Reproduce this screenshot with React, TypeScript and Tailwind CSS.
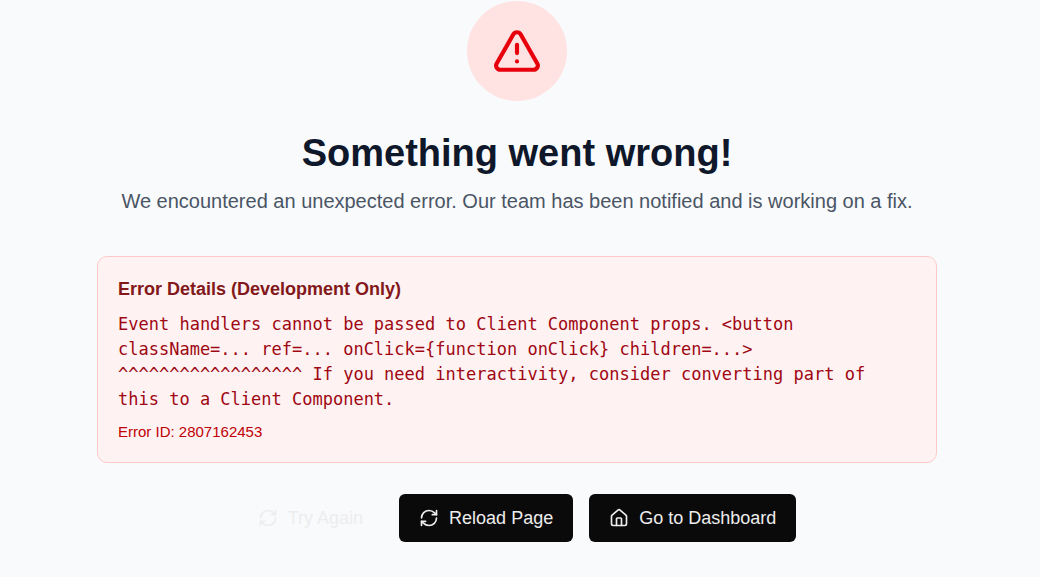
import { House, RefreshCw, TriangleAlert } from "lucide-react";

const buttonBase =
  "inline-flex h-12 items-center gap-2.5 rounded-md px-5 text-lg font-medium whitespace-nowrap";

export default function App() {
  return (
    <main className="flex min-h-screen flex-col items-center bg-[#f9fafc] pt-px pr-1.5 pb-8 font-['Liberation_Sans',Arial,sans-serif]">
      <div className="flex w-full max-w-[840px] flex-col items-center">
        <div className="flex size-[100px] items-center justify-center rounded-full bg-[#ffe2e2]">
          <TriangleAlert className="size-[50px] text-[#e7000b]" aria-hidden="true" />
        </div>
        <h1 className="mt-[30px] text-center text-[38px] leading-[45px] font-bold text-[#0f172a]">
          Something went wrong!
        </h1>
        <p className="mt-2.5 text-center text-xl leading-[30px] text-[#4a5565]">
          We encountered an unexpected error. Our team has been notified and is working on a fix.
        </p>

        <section className="mt-10 w-full rounded-[10px] border border-[#ffc9c9] bg-[#fef2f2] p-5">
          <h2 className="text-lg leading-[25px] font-bold text-[#82181a]">
            Error Details (Development Only)
          </h2>
          <p className="mt-2.5 font-['DejaVu_Sans_Mono',monospace] text-[17px] leading-[25px] wrap-break-word text-[#9f0712]">
            {
              "Event handlers cannot be passed to Client Component props. <button className=... ref=... onClick={function onClick} children=...> ^^^^^^^^^^^^^^^^^^ If you need interactivity, consider converting part of this to a Client Component."
            }
          </p>
          <p className="mt-2.5 text-[15px] leading-5 text-[#c10007]">Error ID: 2807162453</p>
        </section>

        <div className="mt-[31px] flex flex-wrap justify-center gap-4">
          <button type="button" className={`${buttonBase} text-[#ededed]`}>
            <RefreshCw className="size-5" aria-hidden="true" />
            Try Again
          </button>
          <button type="button" className={`${buttonBase} bg-[#0a0a0a] text-[#ededed]`}>
            <RefreshCw className="size-5" aria-hidden="true" />
            Reload Page
          </button>
          <a href="#dashboard" className={`${buttonBase} bg-[#0a0a0a] text-[#ededed]`}>
            <House className="size-5" aria-hidden="true" />
            Go to Dashboard
          </a>
        </div>
      </div>
    </main>
  );
}
